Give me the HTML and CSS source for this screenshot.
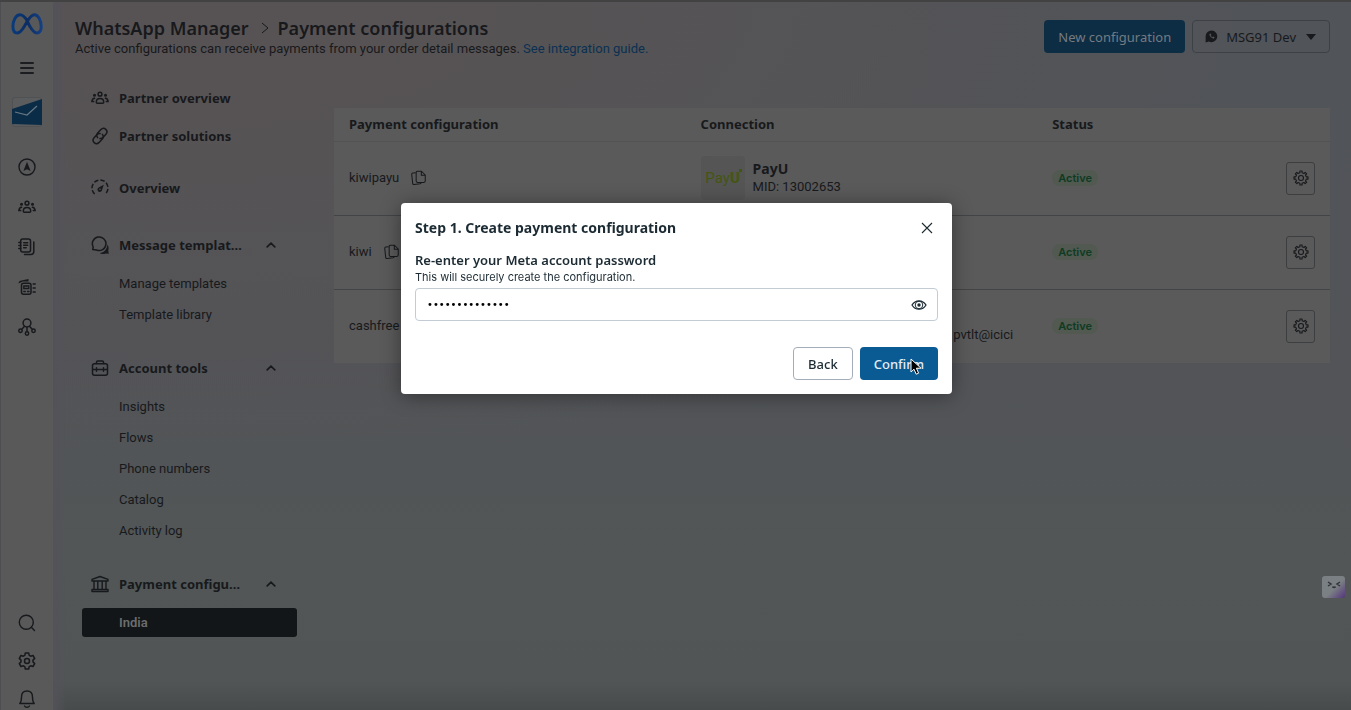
FILE: index.html
```
<!DOCTYPE html>
<html lang="en">
<head>
<meta charset="utf-8">
<title>WhatsApp Manager - Payment configurations</title>
<link rel="stylesheet" href="styles.css">
</head>
<body>
<svg class="sprite" aria-hidden="true">
  <symbol id="people" viewBox="0 0 18 18"><g fill="none" stroke="currentColor" stroke-width="1.5" stroke-linecap="round"><circle cx="9" cy="5.2" r="1.9"/><path d="M5.3 13.2c0-2.6 1.500-3.600 3.700-3.600s3.700 1 3.700 3.600c0 .8-.4 1-1 1H6.300c-.6 0-1-.2-1-1zM3.600 9.300C1.600 9.500 1 10.600.9 12.600h1.800M14.400 9.300c2 .2 2.600 1.300 2.700 3.300h-1.800"/></g><circle cx="3.500" cy="6.200" r="1.500" fill="currentColor"/><circle cx="14.500" cy="6.200" r="1.500" fill="currentColor"/></symbol>
  <symbol id="link" viewBox="0 0 18 18"><g fill="none" stroke="currentColor" stroke-width="1.500" stroke-linecap="round"><path d="M6.600 10.600c-1.300-1.600-1.100-3.300.1-4.600l3.200-3.400c1.500-1.500 3.500-1.500 4.900-.2s1.400 3.400.1 4.900l-3 3.200c-.8.800-1.800 1.100-2.900.9"/><path d="M11.400 7.400c1.300 1.600 1.100 3.300-.1 4.600l-3.200 3.400c-1.500 1.500-3.500 1.500-4.900.2s-1.400-3.400-.1-4.900l3-3.200c.8-.8 1.800-1.100 2.900-.9"/></g></symbol>
  <symbol id="gauge" viewBox="0 0 18 18"><circle cx="9" cy="9" r="8" fill="none" stroke="currentColor" stroke-width="1.500" stroke-dasharray="4.500 2 4.500 2 4.500 2 4.500 2 4.500 2 4.500 20" transform="rotate(132 9 9)"/><path d="M12.800 5.700L11.200 10.600a2.400 2.400 0 1 1-3.500-2.200z" fill="currentColor"/><circle cx="9" cy="10.200" r=".8" fill="#555254"/></symbol>
  <symbol id="chat" viewBox="0 0 18 18"><path d="M1.700 13.500l.5-2.500A6.800 6.800 0 1 1 5.500 14z" fill="none" stroke="currentColor" stroke-width="1.500" stroke-linejoin="round"/><path d="M16.400 8.500c1.400 2 1.400 4.300.8 6.100l.6 3.200-3.100-.3c-2 1-4.400.7-5.800-.5 4-.4 7.300-3.700 7.500-8.500z" fill="currentColor"/></symbol>
  <symbol id="toolbox" viewBox="0 0 18 18"><g fill="none" stroke="currentColor" stroke-width="1.500" stroke-linecap="round"><rect x="1.500" y="4.700" width="15" height="11.500" rx="2"/><path d="M5.500 4.500V3.300c0-.9.5-1.300 1.300-1.300h4.400c.8 0 1.300.4 1.300 1.300v1.200M1.700 10.500h14.600M5.500 8.800v3.400M12.500 8.800v3.400"/></g></symbol>
  <symbol id="bank" viewBox="0 0 18 18"><g fill="none" stroke="currentColor" stroke-width="1.400" stroke-linejoin="round"><path d="M1 6V4.300L9 1.500l8 2.800V6zM1 16.500v-2h16v2zM3 6v8.500M6.800 6v8.500M11.200 6v8.500M15 6v8.500"/></g></symbol>
  <symbol id="compass" viewBox="0 0 18 18"><circle cx="9" cy="9" r="8" fill="none" stroke="currentColor" stroke-width="1.400"/><path d="M9 3.800l3.600 9.200L9 11.300 5.400 13z" fill="currentColor"/></symbol>
  <symbol id="notebook" viewBox="0 0 18 18"><g fill="none" stroke="currentColor" stroke-width="1.500" stroke-linecap="round"><rect x="2.700" y="1" width="9.800" height="13" rx="2"/><path d="M15.800 4v9.500c0 2-1 3-3 3H6.500M.8 4.500h2M.8 7.500h2M.8 10.500h2M5.700 4.800h4M5.700 7.300h4M5.700 9.800h2.500"/></g></symbol>
  <symbol id="news" viewBox="0 0 18 18"><g fill="none" stroke="currentColor" stroke-width="1.500" stroke-linecap="round"><rect x="3.500" y="5.200" width="9.500" height="11" rx="2"/><path d="M15.200 6h2M15.200 10h2M15.200 14h2"/><path d="M5.800 8h5v2.500h-5zM5.800 13.500h1.500M9.500 13.500h1.500" stroke-width="1.300"/></g><path d="M.5 5.500c.3-2 1.200-2.700 3-3L10.500 1v2.600H4.800z" fill="currentColor"/></symbol>
  <symbol id="network" viewBox="0 0 18 18"><g fill="none" stroke="currentColor" stroke-width="1.500"><circle cx="9" cy="5" r="3.900"/><circle cx="2.500" cy="12.800" r="1.700"/><circle cx="9" cy="15.500" r="1.700"/><circle cx="15.500" cy="12.800" r="1.700"/><path d="M9 9v4.800M6.800 8l-3 3.300M11.200 8l3 3.300"/></g></symbol>
  <symbol id="search" viewBox="0 0 18 18"><g fill="none" stroke="currentColor" stroke-width="1.400" stroke-linecap="round"><circle cx="8.300" cy="8.300" r="7"/><path d="M13.300 13.300l3.200 3.200"/></g></symbol>
  <symbol id="gear" viewBox="0 0 18 18"><g fill="none" stroke="currentColor" stroke-width="1.500" stroke-linejoin="round"><circle cx="9" cy="9" r="2.500"/><path d="M7.300 1h3.400l.5 2.300 1.500.9 2.300-.7 1.700 2.900-1.700 1.700v1.800l1.700 1.700-1.700 2.900-2.300-.7-1.500.9-.5 2.300H7.300l-.5-2.300-1.500-.9-2.300.7-1.700-2.900L3 9.900V8.100L1.300 6.400 3 3.500l2.300.7 1.500-.9z"/></g></symbol>
  <symbol id="cog" viewBox="0 0 16 16"><g fill="none" stroke="currentColor" stroke-width="1.100" stroke-linejoin="round"><circle cx="8" cy="8" r="2.500"/><path d="M6.900 1h2.200v1.700l1.900.8 1.200-1.200 1.500 1.500L12.500 5l.8 1.900H15v2.200h-1.700l-.8 1.900 1.200 1.200-1.500 1.500-1.200-1.200-1.900.8V15H6.900v-1.700L5 12.500l-1.200 1.200-1.500-1.500L3.500 11l-.8-1.900H1V6.900h1.700L3.500 5 2.300 3.800l1.500-1.500L5 3.500l1.900-.8z"/></g></symbol>
  <symbol id="bell" viewBox="0 0 18 18"><g fill="none" stroke="currentColor" stroke-width="1.400" stroke-linejoin="round" stroke-linecap="round"><path d="M1.800 13.500c1.400-1.500 1.700-2.800 1.700-6.500C3.500 3.300 5.800 1 9 1s5.500 2.300 5.500 6c0 3.700.3 5 1.700 6.500z"/><path d="M6.500 16c.5.900 1.400 1.300 2.500 1.300s2-.4 2.500-1.300"/></g></symbol>
  <symbol id="copy" viewBox="0 0 16 16"><g fill="none" stroke="currentColor" stroke-width="1.100" stroke-linejoin="round"><path d="M5.500 2.200c0-.9.400-1.400 1.300-1.400h4.400l4 4v6.500c0 .9-.5 1.400-1.400 1.400h-7c-.9 0-1.300-.5-1.300-1.400zM11 1v4h4"/><path d="M5 2.300l-3 .4c-.9.100-1.300.6-1.200 1.500l1 9.500c.1.900.6 1.300 1.500 1.200l6.500-.8c.6-.1.900-.4 1-1"/></g></symbol>
  <symbol id="up" viewBox="0 0 10 6"><path d="M1.200 4.800L5 1.200l3.800 3.600" fill="none" stroke="currentColor" stroke-width="1.700" stroke-linecap="round"/></symbol>
</svg>
<div class="app">
  <nav class="rail" aria-label="Business tools">
    <svg class="meta" viewBox="0 0 32 22"><defs><linearGradient id="mg"><stop offset="0" stop-color="#0a3b7c"/><stop offset=".5" stop-color="#0b2d62"/><stop offset="1" stop-color="#153f82"/></linearGradient></defs><path d="M16 7.500C13.500 3.300 11.600 1.700 9 1.700 4.800 1.700 1.900 7.600 1.900 13.500c0 4 1.600 6.500 4.500 6.500 2.500 0 4-1.700 7-6.700L16 8.800c3-5 4.700-7.100 7.300-7.100 4 0 6.900 5.900 6.900 11.900 0 4-1.600 6.400-4.400 6.400-2.600 0-4.200-2-7-6.700z" fill="none" stroke="url(#mg)" stroke-width="3"/></svg>
    <button class="menu" aria-label="Menu"><span></span><span></span><span></span></button>
    <svg class="account" viewBox="0 0 30 30"><rect x=".5" y=".5" width="29" height="29" rx="2.500" fill="#5b5c5e" stroke="#505152"/><path d="M0 12L30 2v26L0 27z" fill="#0b2c46"/><path d="M3 15l12 3L25 9" fill="none" stroke="#667784" stroke-width="1.200"/></svg>
    <div class="tools">
      <button aria-label="Ads"><svg><use href="#compass"/></svg></button>
      <button aria-label="Audiences"><svg><use href="#people"/></svg></button>
      <button aria-label="Pages"><svg><use href="#notebook"/></svg></button>
      <button aria-label="News"><svg><use href="#news"/></svg></button>
      <button aria-label="Integrations"><svg><use href="#network"/></svg></button>
    </div>
    <div class="support">
      <button aria-label="Search"><svg><use href="#search"/></svg></button>
      <button aria-label="Settings"><svg><use href="#gear"/></svg></button>
      <button aria-label="Notifications"><svg><use href="#bell"/></svg></button>
    </div>
  </nav>
  <div class="page">
    <header class="top">
      <div class="heading">
        <h1><span>WhatsApp Manager</span><svg viewBox="0 0 8 12"><path d="M1 1l6 5-6 5" fill="none" stroke="currentColor"/></svg><span>Payment configurations</span></h1>
        <p>Active configurations can receive payments from your order detail messages. <a href="#">See integration guide.</a></p>
      </div>
      <div class="actions">
        <button class="new">New configuration</button>
        <button class="switcher"><svg viewBox="0 0 14 14"><path d="M7 .5a6.300 6.300 0 1 1-2.800 12L.7 13.400V7A6.300 6.300 0 0 1 7 .5z" fill="currentColor"/><path d="M4.700 4.300c0 2.500 2 4.700 4.800 5l.9-1.400-1.700-.9-.8.700c-.8-.4-1.300-1-1.600-1.700l.6-.7-.7-1.600z" fill="#505458"/></svg><span>MSG91 Dev</span><i></i></button>
      </div>
    </header>
    <div class="body">
      <nav class="side" aria-label="WhatsApp Manager">
        <a class="head" href="#"><svg><use href="#people"/></svg>Partner overview</a>
        <a class="head" href="#"><svg><use href="#link"/></svg>Partner solutions</a>
        <a class="head overview" href="#"><svg><use href="#gauge"/></svg>Overview</a>
        <section>
          <button class="head"><svg><use href="#chat"/></svg>Message templat…<svg class="up"><use href="#up"/></svg></button>
          <a href="#">Manage templates</a>
          <a href="#">Template library</a>
        </section>
        <section>
          <button class="head"><svg><use href="#toolbox"/></svg>Account tools<svg class="up"><use href="#up"/></svg></button>
          <a href="#">Insights</a>
          <a href="#">Flows</a>
          <a href="#">Phone numbers</a>
          <a href="#">Catalog</a>
          <a href="#">Activity log</a>
        </section>
        <section>
          <button class="head"><svg><use href="#bank"/></svg>Payment configu…<svg class="up"><use href="#up"/></svg></button>
          <a class="current" href="#" aria-current="page">India</a>
        </section>
      </nav>
      <main>
        <table>
          <thead><tr><th>Payment configuration</th><th>Connection</th><th colspan="2">Status</th></tr></thead>
          <tbody>
            <tr>
              <td><div class="name">kiwipayu<button class="copy" aria-label="Copy"><svg><use href="#copy"/></svg></button></div></td>
              <td><div class="conn"><div class="logo"><span>Pay<b>U</b></span><i></i></div><div><strong>PayU</strong><span>MID: 13002653</span></div></div></td>
              <td><span class="badge">Active</span></td>
              <td><button class="cog" aria-label="Configuration settings"><svg><use href="#cog"/></svg></button></td>
            </tr>
            <tr>
              <td><div class="name">kiwi<button class="copy" aria-label="Copy"><svg><use href="#copy"/></svg></button></div></td>
              <td></td>
              <td><span class="badge">Active</span></td>
              <td><button class="cog" aria-label="Configuration settings"><svg><use href="#cog"/></svg></button></td>
            </tr>
            <tr>
              <td><div class="name">cashfree</div></td>
              <td><div class="upi">pvtlt@icici</div></td>
              <td><span class="badge">Active</span></td>
              <td><button class="cog" aria-label="Configuration settings"><svg><use href="#cog"/></svg></button></td>
            </tr>
          </tbody>
        </table>
      </main>
    </div>
  </div>
</div>
<div class="backdrop">
  <form class="dialog" role="dialog" aria-labelledby="title">
    <div class="title"><h2 id="title">Step 1. Create payment configuration</h2><button type="button" class="close" aria-label="Close"><svg viewBox="0 0 12 12"><path d="M1 1l10 10M11 1L1 11" stroke="currentColor" stroke-width="1.100"/></svg></button></div>
    <label for="pw">Re-enter your Meta account password</label>
    <p>This will securely create the configuration.</p>
    <div class="field"><input id="pw" type="password" value="abcdefghijklmn"><button type="button" aria-label="Show password"><svg viewBox="0 0 16 10"><path d="M1 5c1.700-2.800 4-4.200 7-4.200S13.300 2.200 15 5c-1.700 2.800-4 4.200-7 4.200S2.700 7.800 1 5z" fill="none" stroke="currentColor" stroke-width="1.300"/><circle cx="8" cy="5" r="3.800" fill="none" stroke="currentColor"/><circle cx="8" cy="5" r="1.700" fill="currentColor"/></svg></button></div>
    <div class="buttons"><button type="button" class="back">Back</button><button type="button" class="confirm">Confirm<svg class="pointer" viewBox="0 0 12 18"><path d="M1 1v13l3-2.800 2.200 5 2.400-1-2.200-5H11z" fill="#000" stroke="#fff"/></svg></button></div>
  </form>
</div>
<button class="assistant" aria-label="Assistant"><svg viewBox="0 0 14 8"><path d="M1 1l3 2-3 2M13 1l-3 2 3 2M5.500 5.500c.8 1.200 2.200 1.200 3 0" fill="none" stroke="#303438" stroke-width="1.500"/></svg></button>
</body>
</html>
```
FILE: styles.css
```
* { box-sizing: border-box; }
body {
  margin: 0;
  height: 100vh;
  overflow: hidden;
  font: 13px/18px Roboto, "Noto Sans", sans-serif;
  color: #17191c;
}
button, input { font: inherit; color: inherit; }
button { padding: 0; border: 0; background: none; display: flex; align-items: center; }
a { color: inherit; text-decoration: none; }
h1, h2, p { margin: 0; }
h1, h2, th, strong, label, .side .head, .actions button, .buttons button { font-family: "Noto Sans", sans-serif; }
svg { display: block; flex: none; }
.sprite { position: absolute; width: 0; height: 0; }

.app {
  display: flex;
  height: 100%;
  border-top: 2px solid #424242;
  background:
    radial-gradient(ellipse 80% 65% at 15% 0, #575354 20%, #54535600 100%),
    linear-gradient(#515459, #525458 50%, #525656 80%, #515555 96%, #484b4b);
}

.rail {
  display: flex;
  flex-direction: column;
  align-items: center;
  width: 53px;
  padding-top: 11px;
  border-left: 1px solid #4d4d52;
  background: #595959;
}
.meta { width: 32px; height: 22px; }
.menu { flex-direction: column; justify-content: space-between; width: 14px; height: 12px; margin-top: 27px; }
.menu span { width: 14px; height: 2px; border-radius: 1px; background: #1b1d20; }
.account { width: 30px; height: 30px; margin-top: 23px; }
.tools { display: flex; flex-direction: column; gap: 22px; margin-top: 31px; }
.tools svg, .support svg { width: 18px; height: 18px; }
.support { display: flex; flex-direction: column; gap: 20px; margin-top: auto; padding-bottom: 2px; }

.page {
  flex: 1;
  min-width: 0;
  padding: 18px 21px 0 22px;
  background: linear-gradient(90deg, #53525a, #53525a00 13px);
}
.top { display: flex; justify-content: space-between; align-items: flex-start; }
h1 { display: flex; align-items: center; margin-bottom: 2px; font-size: 18px; line-height: 16px; font-weight: 600; }
h1 svg { width: 8px; height: 12px; margin: 0 9px 0 12px; }
.heading p { line-height: 22px; }
.heading a { color: #0b3152; }
.actions { display: flex; gap: 7px; }
.actions button { height: 33px; border-radius: 4px; }
.actions .new { padding: 0 14px; background: #0d2d45; color: #747b81; }
.actions .switcher { padding: 0 13px 0 12px; border: 1px solid #3d4145; }
.switcher svg { width: 13px; height: 13px; margin-right: 8px; }
.switcher i { margin-left: 10px; border: 5px solid transparent; border-top: 6px solid #17191c; border-bottom: 0; }

.body { display: flex; padding-top: 19px; }
.side { display: flex; flex-direction: column; width: 215px; margin-left: 7px; }
.side a, .side .head { display: flex; align-items: center; width: 100%; }
.side a { height: 31px; padding-left: 37px; }
.side .head { height: 38px; padding: 0 21px 0 9px; font-weight: 700; }
.side .head svg { width: 18px; height: 18px; margin-right: 10px; }
.side .overview { margin-top: 14px; }
.side section { margin-top: 19px; }
.side section .head { margin-bottom: 4px; }
.side .head .up { width: 10px; height: 6px; margin: 0 0 0 auto; }
.side a.current { height: 29px; margin-top: 5px; border-radius: 3px; background: #121618; color: #6c6d6e; font-weight: 600; }

main { flex: 1; margin: 29px 0 0 37px; }
table { width: 100%; table-layout: fixed; border-collapse: collapse; background: #5a5a5a; }
th { height: 33px; padding: 0 15px; text-align: left; font-weight: 700; }
td { height: 74px; padding: 0 15px; border-top: 1px solid #434445; }
tbody tr:first-child td { border-color: #515253; }
th:nth-child(1), th:nth-child(2) { width: 35.3%; }
.name { display: flex; align-items: center; gap: 12px; }
.copy svg { width: 15px; height: 16px; }
.conn { display: flex; align-items: center; gap: 8px; }
.conn strong { display: block; font-size: 14px; font-weight: 700; }
.conn span { display: block; }
.logo { position: relative; display: flex; align-items: center; justify-content: center; width: 44px; height: 44px; border-radius: 4px; background: #555; color: #435611; font-size: 15px; }
.logo b { font-weight: 800; }
.logo i { position: absolute; top: 13px; right: 3px; width: 3px; height: 3px; background: #435611; }
.upi { padding: 18px 9px 0 0; text-align: right; }
.badge { display: inline-block; padding: 0 6px; border-radius: 8px; background: #515951; color: #0e3b22; font: 600 11px/16px Inter, sans-serif; }
.cog { justify-content: center; width: 29px; height: 33px; margin-left: auto; border: 1px solid #3c3e40; border-radius: 3px; }
.cog svg { width: 16px; height: 16px; }

.backdrop { position: fixed; inset: 0; display: flex; justify-content: center; align-items: flex-start; padding: 203px 0 0 2px; }
.dialog { width: 551px; padding: 15px 14px 14px; border-radius: 4px; background: #fff; color: #1c2b33; box-shadow: 0 2px 20px #0006; }
.title { display: flex; align-items: center; justify-content: space-between; padding-right: 5px; }
h2 { font-size: 14px; line-height: 20px; font-weight: 700; }
.close svg { width: 12px; height: 12px; }
.dialog label { display: block; margin-top: 13px; font-weight: 600; }
.dialog p { font: 11px/16px Inter, sans-serif; }
.field { display: flex; margin-top: 3px; padding: 0 10px; height: 33px; border: 1px solid #c3ccd4; border-radius: 4px; }
.field input { flex: 1; min-width: 0; padding: 0 1px; border: 0; outline: 0; background: none; color: #000; font: 10px "DejaVu Sans", sans-serif; }
.field svg { width: 16px; height: 10px; }
.buttons { display: flex; justify-content: flex-end; gap: 7px; margin-top: 26px; }
.buttons button { position: relative; height: 33px; padding: 0 14px; border-radius: 4px; font-weight: 500; }
.buttons .back { border: 1px solid #a5aeb8; }
.buttons .confirm { background: #0a5a94; color: #e4edf4; }
.pointer { position: absolute; left: 50px; top: 11px; width: 12px; height: 18px; }

.assistant { position: fixed; right: 6px; top: 576px; justify-content: center; align-items: flex-start; width: 23px; height: 22px; padding-top: 5px; border-radius: 3px; background: linear-gradient(135deg, #7b8084 55%, #54357e); }
.assistant svg { width: 14px; height: 8px; }
```
